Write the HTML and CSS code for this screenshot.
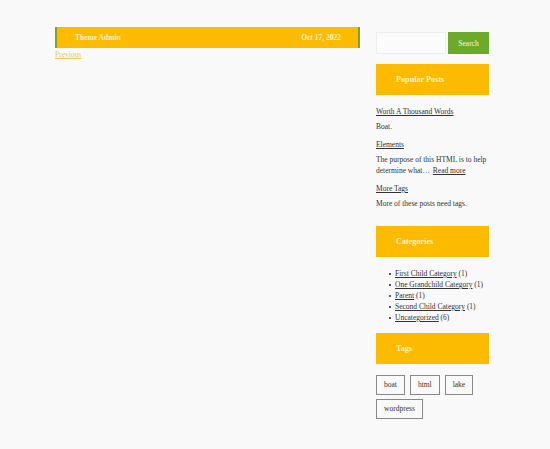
FILE: index.html
```html
<!DOCTYPE html>
<html lang="en">
<head>
    <meta charset="UTF-8">
    <meta name="viewport" content="width=device-width, initial-scale=1.0">
    <title>Blog</title>
    <link rel="stylesheet" href="styles.css">
</head>
<body>
    <div class="site">
        <main class="content">
            <div class="post-meta">
                <span class="author">Theme Admin</span>
                <span class="date">Oct 17, 2022</span>
            </div>
            <a class="nav-previous" href="#">Previous</a>
        </main>

        <aside class="sidebar">
            <form class="search-form">
                <input type="text" class="search-field">
                <button type="button" class="search-submit">Search</button>
            </form>

            <section class="widget">
                <h4 class="widget-title">Popular Posts</h4>
                <div class="popular-post">
                    <a href="#">Worth A Thousand Words</a>
                    <p>Boat.</p>
                </div>
                <div class="popular-post">
                    <a href="#">Elements</a>
                    <p>The purpose of this HTML is to help determine what&hellip; <a class="more-link" href="#">Read more</a></p>
                </div>
                <div class="popular-post">
                    <a href="#">More Tags</a>
                    <p>More of these posts need tags.</p>
                </div>
            </section>

            <section class="widget">
                <h4 class="widget-title">Categories</h4>
                <ul class="categories">
                    <li><a href="#">First Child Category</a> (1)</li>
                    <li><a href="#">One Grandchild Category</a> (1)</li>
                    <li><a href="#">Parent</a> (1)</li>
                    <li><a href="#">Second Child Category</a> (1)</li>
                    <li><a href="#">Uncategorized</a> (6)</li>
                </ul>
            </section>

            <section class="widget">
                <h4 class="widget-title">Tags</h4>
                <div class="tag-cloud">
                    <a href="#">boat</a>
                    <a href="#">html</a>
                    <a href="#">lake</a>
                    <a href="#">wordpress</a>
                </div>
            </section>
        </aside>
    </div>
</body>
</html>
```

FILE: styles.css
```css
body {
    font-family: "Liberation Serif", "Times New Roman", serif;
    font-size: 7.5px;
    color: #333;
    background-color: #f9f9f9;
    margin: 0;
}

a,
a:visited {
    color: #333;
}

.site {
    display: flex;
    gap: 16px;
    padding: 27px 0 0 55px;
}

.content {
    width: 305px;
}

.post-meta {
    display: flex;
    justify-content: space-between;
    height: 21px;
    align-items: center;
    padding: 0 17px 0 18px;
    background-color: #fdbb00;
    border-left: 2px solid #7aa62a;
    border-right: 2px solid #7aa62a;
    color: #fdf1cc;
    font-weight: bold;
}

.nav-previous,
.nav-previous:visited {
    display: inline-block;
    margin-top: 2px;
    color: #f3c55e;
}

.sidebar {
    width: 113px;
    padding-top: 5px;
}

.search-form {
    display: flex;
    gap: 2px;
    height: 22px;
    margin-bottom: 10px;
}

.search-field {
    width: 70px;
    box-sizing: border-box;
    border: 1px solid #eee;
    background-color: #fbfbfb;
    margin: 0;
}

.search-submit {
    flex: 1;
    border: none;
    background-color: #6cab2a;
    color: #f4f8ea;
    font-family: inherit;
    font-size: 7.5px;
    padding: 0;
}

.widget {
    margin-bottom: 10px;
}

.widget-title {
    margin: 0 0 11px;
    height: 31px;
    line-height: 31px;
    padding-left: 20px;
    background-color: #fdbb00;
    color: #fdf1cc;
    font-size: 8.2px;
}

.popular-post {
    padding-bottom: 7px;
}

.popular-post > a {
    display: block;
    line-height: 11px;
}

.popular-post p {
    margin: 4px 0 0;
    line-height: 11px;
}

.more-link {
    margin-left: 1px;
}

.categories {
    margin: 0;
    padding-left: 19px;
    line-height: 11px;
    list-style: none;
}

.categories li {
    position: relative;
}

/* small square bullets */
.categories li::before {
    content: "";
    position: absolute;
    left: -6px;
    top: 5px;
    width: 2px;
    height: 2px;
    background-color: #555;
}

.tag-cloud {
    display: flex;
    flex-wrap: wrap;
    gap: 4px 5px;
}

.tag-cloud a {
    display: inline-block;
    padding: 0 7px;
    line-height: 18px;
    border: 1px solid #888;
    text-decoration: none;
}
```
